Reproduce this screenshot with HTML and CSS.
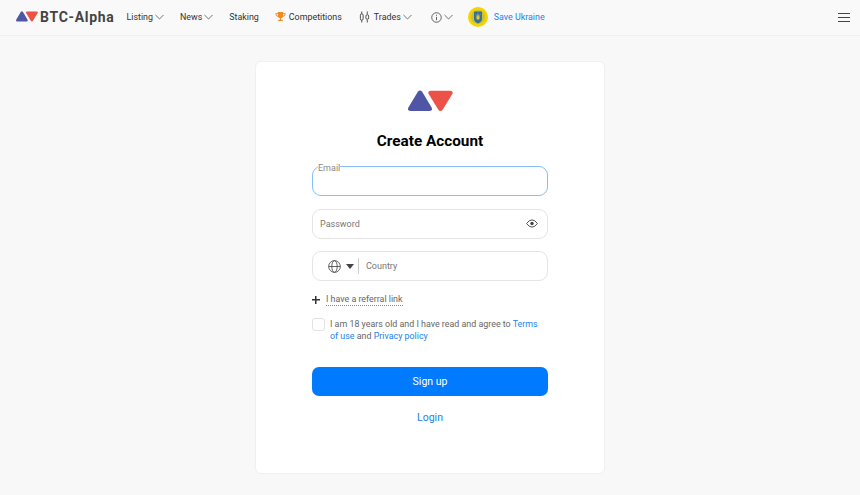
FILE: index.html
```html
<!DOCTYPE html>
<html lang="en">
<head>
<meta charset="utf-8">
<title>BTC-Alpha</title>
<link rel="stylesheet" href="styles.css">
</head>
<body>
<header class="topbar">
  <a class="brand">
    <svg class="brand-mark" viewBox="0 0 45 22"><path d="M10 1.500Q12 -.5 14 1.500L23.600 17.500Q25 21 21.500 21H2.500Q-1 21 .4 17.500Z" fill="#4f56a5"/><path d="M23 .7H42Q45.800 .7 44.300 4L34.800 19.500Q32.500 22.500 30.200 19.500L20.700 4Q19.200 .7 23 .7Z" fill="#ec5247"/></svg>
    <span class="brand-name">BTC-Alpha</span>
  </a>
  <nav class="nav">
    <a class="nav-item item-listing">Listing <svg class="chev" viewBox="0 0 10 6"><path d="M.5.700 5 5.200 9.500.700"/></svg></a>
    <a class="nav-item item-news">News <svg class="chev" viewBox="0 0 10 6"><path d="M.5.700 5 5.200 9.500.700"/></svg></a>
    <a class="nav-item item-staking">Staking</a>
    <a class="nav-item item-comp">
      <svg class="ic-trophy" viewBox="0 0 12 11"><path d="M3 0h6v1h2.500v1.500Q11.500 5 8.600 5.500 7.800 6.800 6.600 7v1.500H8.500V10h-5V8.500h1.900V7Q4.200 6.800 3.400 5.500 .5 5 .5 2.500V1H3Zm-1.500 2v.5q0 1.300 1.500 1.800V2Zm9 0H9v2.300q1.500-.5 1.500-1.800Z" fill="#f08a24"/></svg>
      Competitions</a>
    <a class="nav-item item-trades">
      <svg class="ic-candles" viewBox="0 0 12 12"><path d="M3 0v2.500M3 9.500V12M9 0v3M9 9v3" stroke="#444" fill="none"/><rect x="1.500" y="2.500" width="3" height="7" rx="1.500" fill="none" stroke="#444"/><rect x="7.500" y="3.500" width="3" height="5" rx="1.500" fill="none" stroke="#444"/></svg>
      Trades <svg class="chev" viewBox="0 0 10 6"><path d="M.5.700 5 5.200 9.500.700"/></svg></a>
    <a class="nav-item item-info">
      <svg class="ic-info" viewBox="0 0 12 12"><circle cx="6" cy="6" r="5.200" fill="none" stroke="#444" stroke-width=".9"/><path d="M6 5.300V9M6 3v1.200" stroke="#444" stroke-width=".9"/></svg>
      <svg class="chev" viewBox="0 0 10 6"><path d="M.5.700 5 5.200 9.500.700"/></svg></a>
    <a class="nav-item item-ukraine">
      <svg class="ic-ukraine" viewBox="0 0 20 20"><circle cx="10" cy="10" r="10" fill="#f6d200"/><circle cx="10" cy="10" r="7" fill="#c3c23a"/><path d="M6 4.500h8v7.500q0 2.800-4 4.500-4-1.700-4-4.500Z" fill="#3c6d9a"/><path d="M7.500 6 8.800 12.500h2.400L12.500 6l-1.500 4.200L10 5.500 9 10.200Z" fill="#e6cf2a"/></svg>
      <span class="link">Save Ukraine</span></a>
  </nav>
  <button class="burger" aria-label="Menu"><span></span><span></span><span></span></button>
</header>
<main class="page">
  <section class="card">
    <svg class="card-logo" viewBox="0 0 45 22"><path d="M10 1.500Q12 -.5 14 1.500L23.600 17.500Q25 21 21.500 21H2.500Q-1 21 .4 17.500Z" fill="#4f56a5"/><path d="M23 .7H42Q45.800 .7 44.300 4L34.800 19.500Q32.500 22.500 30.200 19.500L20.700 4Q19.200 .7 23 .7Z" fill="#ec5247"/></svg>
    <h1 class="title">Create Account</h1>
    <form class="form">
      <fieldset class="field field-active"><legend class="legend">Email</legend></fieldset>
      <div class="field"><span class="placeholder">Password</span>
        <svg class="ic-eye" viewBox="0 0 14 10"><path d="M.7 5Q3.500.8 7 .8T13.300 5Q10.500 9.200 7 9.200T.7 5Z" fill="none" stroke="#444" stroke-width="1.100"/><circle cx="7" cy="5" r="2" fill="#444"/></svg>
      </div>
      <div class="field field-country">
        <svg class="ic-globe" viewBox="0 0 14 14"><g fill="none" stroke="#444" stroke-width=".9"><circle cx="7" cy="7" r="6.300"/><ellipse cx="7" cy="7" rx="2.900" ry="6.300"/><path d="M.7 7h12.600"/></g></svg>
        <span class="caret"></span>
        <span class="divider"></span>
        <span class="placeholder">Country</span>
      </div>
      <div class="referral"><span class="plus"></span><span class="referral-text">I have a referral link</span></div>
      <label class="agree"><span class="checkbox"></span><span class="agree-text">I am 18 years old and I have read and agree to <a class="link">Terms</a> <a class="link">of use</a> and <a class="link">Privacy policy</a></span></label>
      <button class="submit" type="button">Sign up</button>
      <a class="login link">Login</a>
    </form>
  </section>
</main>
</body>
</html>
```
FILE: styles.css
```css
* { box-sizing: border-box; }
html, body { margin: 0; height: 100%; }
body {
  background: #f8f8f8;
  font-family: Roboto, "Liberation Sans", sans-serif;
  color: #333;
  overflow: hidden;
}
.link { color: #1a82f0; }

.topbar {
  display: flex;
  align-items: center;
  height: 36px;
  padding: 0 10px 1px 16px;
  border-bottom: 1px solid #f0f0f0;
  background: #f9f9f9;
}
.brand { display: flex; align-items: center; margin-bottom: 1px; }
.brand-mark { width: 22px; height: 11px; }
.brand-name {
  margin-left: 2px;
  font-size: 14px;
  line-height: 16px;
  font-weight: 700;
  letter-spacing: .7px;
  color: #444;
}
.nav { display: flex; align-items: center; margin-left: 12px; color: #333; }
.nav-item { display: flex; align-items: center; white-space: nowrap; font-size: 8.900px; }
.chev { width: 9px; height: 6px; margin-left: 2px; fill: none; stroke: #555; stroke-width: .9; }
.item-news { margin-left: 16px; }
.item-staking { margin-left: 16px; }
.item-comp { margin-left: 16px; }
.item-trades { margin-left: 17px; }
.item-info { margin-left: 19px; }
.item-ukraine { margin-left: 15px; }
.ic-trophy { width: 11px; height: 10px; margin-right: 3px; }
.ic-candles { width: 11px; height: 12px; margin-right: 4px; }
.ic-info { width: 11px; height: 11px; }
.ic-ukraine { width: 20px; height: 20px; margin-right: 6px; }
.burger {
  margin-left: auto;
  width: 12px;
  height: 9px;
  padding: 0;
  border: 0;
  background: none;
  display: flex;
  flex-direction: column;
  justify-content: space-between;
}
.burger span { display: block; height: 1px; background: #444; }

.page { display: flex; justify-content: center; padding-top: 25px; }
.card {
  width: 350px;
  height: 413px;
  padding: 28px 56px 0;
  background: #fff;
  border: 1px solid #f0f0f0;
  border-radius: 6px;
  display: flex;
  flex-direction: column;
  align-items: center;
}
.card-logo { width: 45px; height: 22px; flex: none; }
.title {
  margin: 20px 0 0;
  font-size: 15.300px;
  line-height: 18px;
  font-weight: 700;
  color: #000;
}
.form { width: 100%; margin-top: 16px; display: flex; flex-direction: column; }
.field {
  height: 30px;
  margin: 0 0 13px;
  padding: 0 7px;
  border: 1px solid #e4e4e4;
  border-radius: 9px;
  display: flex;
  align-items: center;
  min-width: 0;
}
.field-active {
  display: block;
  margin-top: -6px;
  height: 36px;
  padding: 0 5px;
  border-color: #85c0fb;
}
.legend { padding: 4px 0 0; font-size: 9px; line-height: 9px; color: #888; }
.placeholder { font-size: 9px; color: #777; }
.ic-eye { width: 12px; height: 9px; margin-left: auto; margin-right: 2px; margin-bottom: 2px; }
.field-country { margin-top: -1px; margin-bottom: 0; padding-left: 15px; }
.ic-globe { width: 13px; height: 13px; flex: none; }
.caret { margin-left: 5px; border: 4px solid transparent; border-top: 5px solid #444; border-bottom: 0; }
.divider { width: 1px; height: 16px; margin: 0 7px 0 4px; background: #ccc; }
.referral { display: flex; align-items: center; margin-top: 13px; height: 12px; }
.plus {
  width: 8px;
  height: 8px;
  margin-right: 6px;
  background: linear-gradient(#333,#333) center/8px 1.500px no-repeat, linear-gradient(#333,#333) center/1.500px 8px no-repeat;
}
.referral-text { font-size: 8.900px; line-height: 11px; color: #666; border-bottom: 1px dotted #888; }
.agree { display: flex; margin-top: 12px; }
.checkbox { flex: none; width: 13px; height: 13px; margin: 0 5px 0 0; border: 1px solid #e2e2e2; border-radius: 3px; }
.agree-text { font-size: 8.900px; line-height: 12px; color: #666; }
.submit {
  margin-top: 25px;
  height: 29px;
  border: 0;
  border-radius: 7px;
  background: #007bff;
  color: #fff;
  font: 10.500px Roboto, "Liberation Sans", sans-serif;
}
.login { margin-top: 16px; text-align: center; font-size: 10.500px; line-height: 12px; }
```
